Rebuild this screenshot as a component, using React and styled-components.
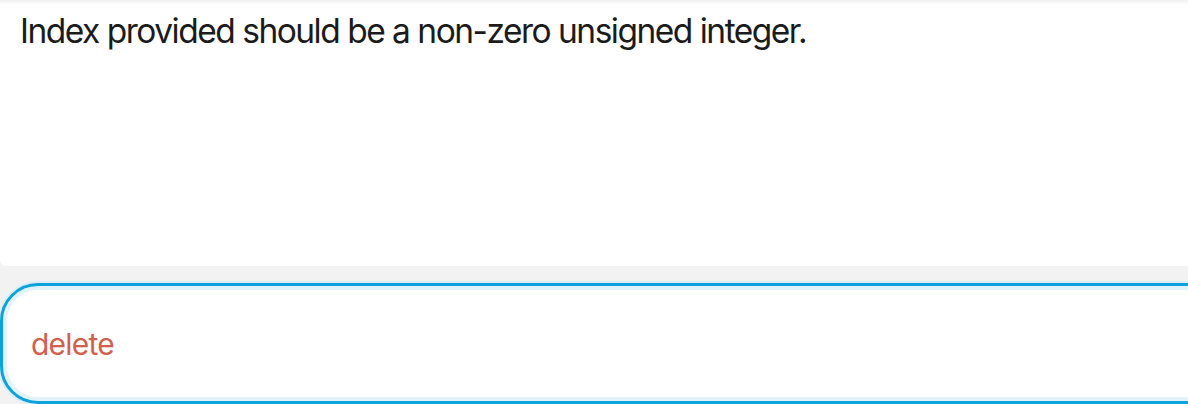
import styled, { createGlobalStyle } from "styled-components";

const GlobalStyle = createGlobalStyle`
  html, body {
    margin: 0;
    padding: 0;
    background: #f2f2f2;
    overflow: hidden;
  }
  body {
    font-family: Inter, "Noto Sans", "Liberation Sans", sans-serif;
  }
`;

const Page = styled.div`
  width: 1188px;
  height: 404px;
  display: flex;
  flex-direction: column;
  overflow: hidden;
`;

const MessageCard = styled.div`
  height: 266px;
  background: #ffffff;
  border-radius: 0 0 0 6px;
  box-shadow: inset 0 5px 4px -3px rgba(0, 0, 0, 0.07);
  padding: 11px 20px 0;
  box-sizing: border-box;
`;

const Message = styled.p`
  margin: 0;
  font-size: 33.5px;
  line-height: 40px;
  letter-spacing: -1.5px;
  color: #1b1b1b;
`;

const InputBox = styled.div`
  margin-top: 17px;
  width: 1240px;
  height: 121px;
  box-sizing: border-box;
  display: flex;
  align-items: center;
  padding-left: 28px;
  background: #ffffff;
  border: 3px solid #0ca2dc;
  border-radius: 38px;
  box-shadow: 0 0 0 2px #dcedf6, inset 0 0 0 4px #e1f2fa;
`;

const Command = styled.span`
  font-size: 30px;
  letter-spacing: -0.8px;
  color: #d0604b;
  padding-top: 1px;
`;

export default function App() {
  return (
    <>
      <GlobalStyle />
      <Page>
        <MessageCard>
          <Message>Index provided should be a non-zero unsigned integer.</Message>
        </MessageCard>
        <InputBox>
          <Command>delete</Command>
        </InputBox>
      </Page>
    </>
  );
}
